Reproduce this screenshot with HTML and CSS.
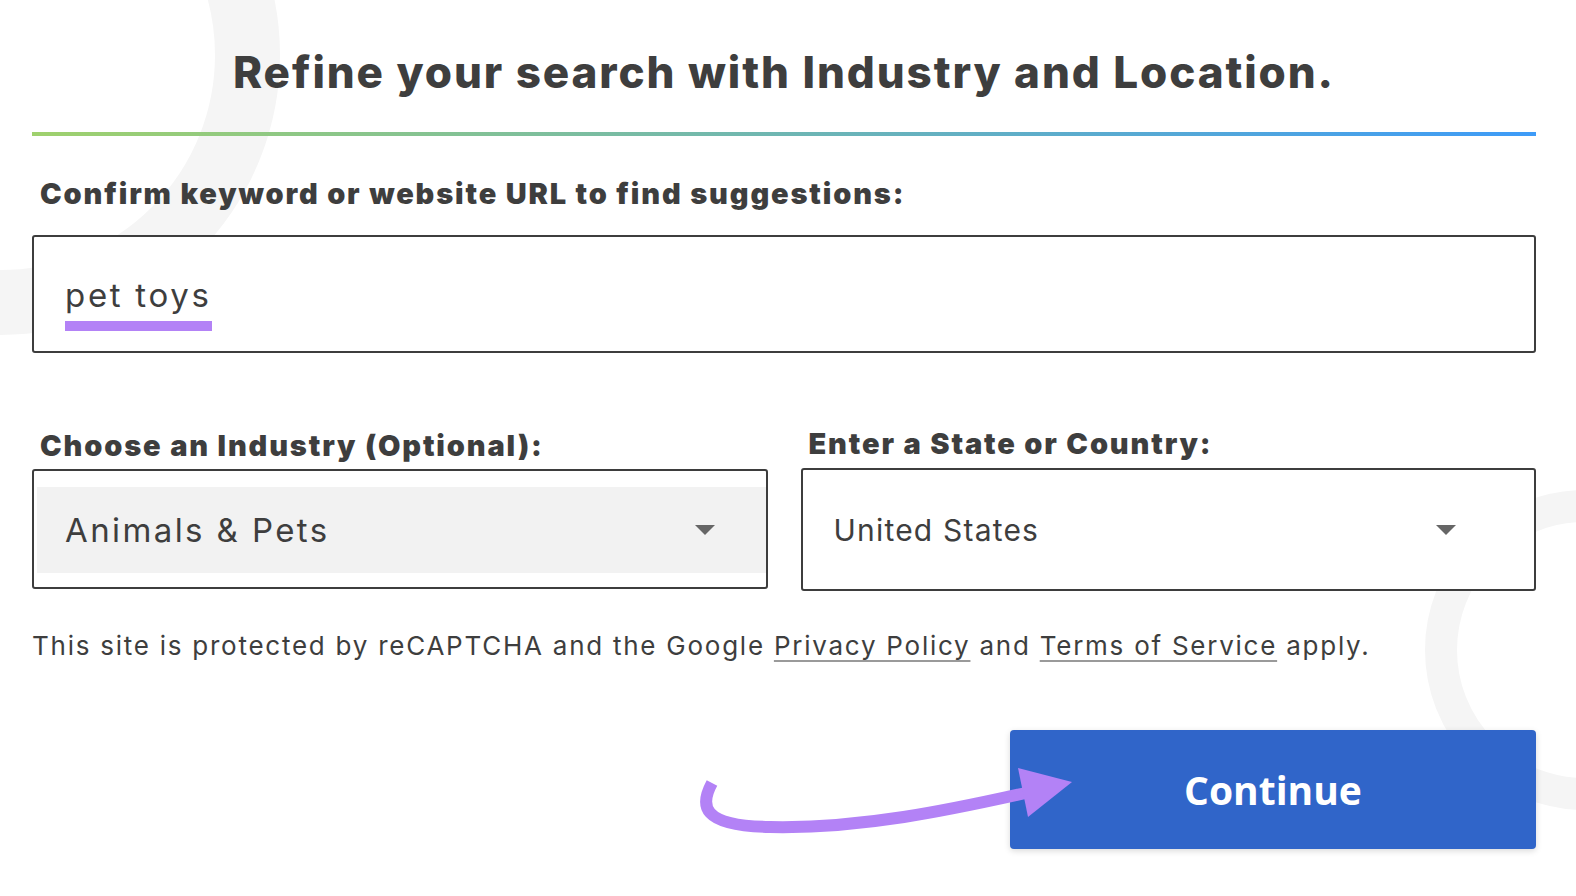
FILE: index.html
```html
<!DOCTYPE html>
<html lang="en">
<head>
<meta charset="utf-8">
<title>Refine your search</title>
<link rel="stylesheet" href="styles.css">
</head>
<body>
<svg class="bg-rings" width="1576" height="896" viewBox="0 0 1576 896" aria-hidden="true">
  <circle cx="0" cy="55" r="247.5" stroke-width="65"/>
  <circle cx="1585" cy="650" r="144" stroke-width="32"/>
</svg>
<main class="page">
  <h1 class="title">Refine your search with Industry and Location.</h1>
  <div class="rule"></div>
  <div class="label label-main">Confirm keyword or website URL to find suggestions:</div>
  <div class="field keyword"><span class="typed">pet toys</span></div>
  <div class="row">
    <div class="col col-industry">
      <div class="label">Choose an Industry (Optional):</div>
      <div class="select select-industry">
        <div class="select-inner">
          <span class="value value-lg">Animals &amp; Pets</span>
          <span class="caret"></span>
        </div>
      </div>
    </div>
    <div class="col col-country">
      <div class="label">Enter a State or Country:</div>
      <div class="select select-country">
        <span class="value">United States</span>
        <span class="caret"></span>
      </div>
    </div>
  </div>
  <p class="notice">This site is protected by reCAPTCHA and the Google <a href="#">Privacy Policy</a> and <a href="#">Terms of Service</a> apply.</p>
  <div class="actions"><button class="continue" type="button">Continue</button></div>
</main>
<svg class="annotation" width="1576" height="896" viewBox="0 0 1576 896" aria-hidden="true">
  <path d="M712 783 C700 805 700 826 770 827 C860 829 950 810 1030 792" fill="none" stroke="#b382f6" stroke-width="12"/>
  <polygon points="1018,768 1072,782 1028,817" fill="#b382f6"/>
</svg>
</body>
</html>
```
FILE: styles.css
```css
html, body {
  margin: 0;
  padding: 0;
  background: #ffffff;
  overflow: hidden;
}

body {
  width: 1576px;
  height: 896px;
  position: relative;
  font-family: "Inter", "Lato", "Liberation Sans", sans-serif;
  color: #3e3e3e;
}

.bg-rings {
  position: absolute;
  left: 0;
  top: 0;
  z-index: 0;
  pointer-events: none;
}

.bg-rings circle {
  fill: none;
  stroke: #f5f5f5;
}

.annotation {
  position: absolute;
  left: 0;
  top: 0;
  z-index: 3;
  pointer-events: none;
}

.page {
  position: relative;
  z-index: 1;
  width: 1504px;
  margin-left: 32px;
  padding-top: 50px;
}

.title {
  margin: 0;
  font-size: 44px;
  line-height: 44px;
  font-weight: 800;
  letter-spacing: 1.9px;
  text-align: center;
  color: #3e3e3e;
}

.rule {
  height: 4px;
  margin-top: 38px;
  background: linear-gradient(90deg, #9fd16d 0%, #3d9bf8 100%);
}

.label {
  font-size: 29px;
  line-height: 29px;
  font-weight: 900;
  letter-spacing: 1.85px;
  padding-left: 8px;
  color: #3e3e3e;
}

.label-main {
  margin-top: 43px;
}

.field {
  box-sizing: border-box;
  background: #fff;
  border: 2px solid #3d3d3d;
  border-radius: 3px;
}

.keyword {
  margin-top: 27px;
  height: 118px;
  padding: 42px 0 0 31px;
}

.typed {
  display: inline-block;
  font-size: 33px;
  line-height: 33px;
  font-weight: 400;
  letter-spacing: 2.7px;
  color: #3e3e3e;
  padding-bottom: 9px;
  border-bottom: 10px solid #b382f6;
}

.row {
  display: grid;
  grid-template-columns: 1fr 1fr;
  column-gap: 33px;
  margin-top: 76px;
}

.col-industry {
  padding-top: 2px;
}

.col-industry .label {
  margin-bottom: 9px;
}

.col-country .label {
  margin-bottom: 10px;
}

.select {
  box-sizing: border-box;
  background: #fff;
  border: 2px solid #3d3d3d;
  border-radius: 3px;
}

.select-industry {
  height: 120px;
  padding: 16px 0 14px 3px;
}

.select-inner {
  height: 86px;
  background: #f2f2f2;
  display: flex;
  align-items: center;
  justify-content: space-between;
  padding: 0 51px 0 28px;
}

.select-country {
  height: 123px;
  display: flex;
  align-items: center;
  justify-content: space-between;
  padding: 0 78px 0 31px;
}

.value {
  font-size: 30px;
  line-height: 30px;
  font-weight: 400;
  letter-spacing: 1.2px;
  color: #3e3e3e;
}

.value-lg {
  font-size: 33px;
  line-height: 33px;
  letter-spacing: 2.4px;
}

.caret {
  width: 0;
  height: 0;
  border-left: 10px solid transparent;
  border-right: 10px solid transparent;
  border-top: 10px solid #666666;
}

.notice {
  margin: 42px 0 0 0;
  font-size: 26px;
  line-height: 26px;
  letter-spacing: 1.75px;
  color: #3e3e3e;
}

.notice a {
  color: #3e3e3e;
  text-decoration: underline;
  text-decoration-color: #9a9a9a;
  text-decoration-thickness: 2px;
  text-underline-offset: 5px;
}

.actions {
  display: flex;
  justify-content: flex-end;
  margin-top: 71px;
}

.continue {
  width: 526px;
  height: 119px;
  border: none;
  border-radius: 4px;
  background: #3065c9;
  box-shadow: 0 2px 6px rgba(0, 0, 0, 0.15);
  color: #ffffff;
  font-family: "Open Sans", "Noto Sans", sans-serif;
  font-size: 39px;
  font-weight: 700;
  cursor: pointer;
}
```
